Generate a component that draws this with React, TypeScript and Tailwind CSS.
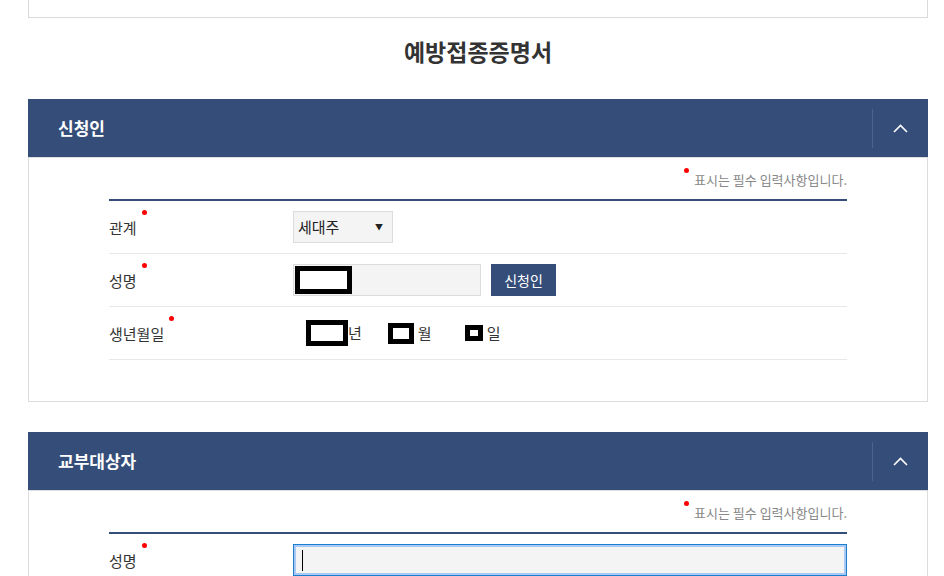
import React from "react";

const FONT = { fontFamily: '"Noto Sans CJK KR", "Noto Sans", sans-serif' };

const Chevron = () => (
  <svg width="15" height="9" viewBox="0 0 15 9" fill="none">
    <polyline points="1,8 7.5,1.5 14,8" stroke="white" strokeWidth="1.6" />
  </svg>
);

const Dot = () => (
  <span className="absolute -right-[10px] -top-[8px] h-[5px] w-[5px] rounded-full bg-[#ff0000]" />
);

const Label = ({ text }: { text: string }) => (
  <div className="w-[184px] shrink-0">
    <span className="relative inline-block text-[15px] leading-[20px] text-[#333]">
      {text}
      <Dot />
    </span>
  </div>
);

const Redact = ({ className }: { className: string }) => (
  <div className={`border-[5px] border-black bg-white ${className}`} />
);

const Section = ({ title, children }: { title: string; children: React.ReactNode }) => (
  <div>
    <div className="flex h-[58px] items-center bg-[#344d79]">
      <h2 className="flex-1 pl-[30px] text-[17px] font-bold text-white">{title}</h2>
      <div className="h-[39px] w-px bg-[#4b6391]" />
      <button className="flex h-full w-[55px] items-center justify-center">
        <Chevron />
      </button>
    </div>
    <div className="border border-[#dcdcdc] px-[80px]">
      <p className="mt-[12px] flex justify-end text-[13px] leading-[20px] text-[#888]">
        <span className="relative">
          <span className="absolute -left-[10px] top-[-2px] h-[5px] w-[5px] rounded-full bg-[#ff0000]" />
          표시는 필수 입력사항입니다.
        </span>
      </p>
      <div className="mt-[9px] h-[2px] bg-[#344d79]" />
      {children}
    </div>
  </div>
);

export default function App() {
  return (
    <div className="min-h-[576px] bg-white" style={FONT}>
      <div className="ml-[28px] w-[900px]">
        <div className="h-[18px] border-x border-b border-[#d9d9d9]" />
        <h1 className="pt-[18px] pb-[33px] text-center text-[23px] font-bold leading-[30px] text-[#333]">
          예방접종증명서
        </h1>

        <Section title="신청인">
          <div className="flex h-[53px] items-center border-b border-[#e8e8e8]">
            <Label text="관계" />
            <div className="flex h-[32px] w-[100px] items-center justify-between border border-[#dcdcdc] bg-[#f4f4f4] pl-[4px] pr-[9px] text-[15px] text-[#222]">
              <span>세대주</span>
              <span className="text-[8px]">▼</span>
            </div>
          </div>
          <div className="flex h-[53px] items-center border-b border-[#e8e8e8]">
            <Label text="성명" />
            <div className="flex h-[32px] w-[188px] items-center border border-[#dcdcdc] bg-[#f4f4f4] pl-[1px]">
              <Redact className="h-[28px] w-[57px]" />
            </div>
            <button className="ml-[10px] h-[32px] w-[65px] bg-[#344d79] text-[14px] text-white">
              신청인
            </button>
          </div>
          <div className="flex h-[53px] items-center border-b border-[#e8e8e8]">
            <Label text="생년월일" />
            <div className="flex items-center text-[15px] text-[#333]">
              <Redact className="ml-[13px] h-[26px] w-[42px]" />
              <span>년</span>
              <Redact className="ml-[26px] h-[21px] w-[26px]" />
              <span className="ml-[4px]">월</span>
              <Redact className="ml-[33px] h-[16px] w-[18px]" />
              <span className="ml-[4px]">일</span>
            </div>
          </div>
          <div className="h-[41px]" />
        </Section>

        <div className="h-[30px]" />

        <Section title="교부대상자">
          <div className="flex h-[53px] items-center border-b border-[#e8e8e8]">
            <Label text="성명" />
            <div className="flex h-[32px] flex-1 items-center border border-[#1a7fd4] bg-[#f4f4f4] pl-[8px] shadow-[inset_0_0_0_2px_#a9c8f2]">
              <span className="h-[21px] w-px bg-black" />
            </div>
          </div>
          <div className="h-[41px]" />
        </Section>
      </div>
    </div>
  );
}
